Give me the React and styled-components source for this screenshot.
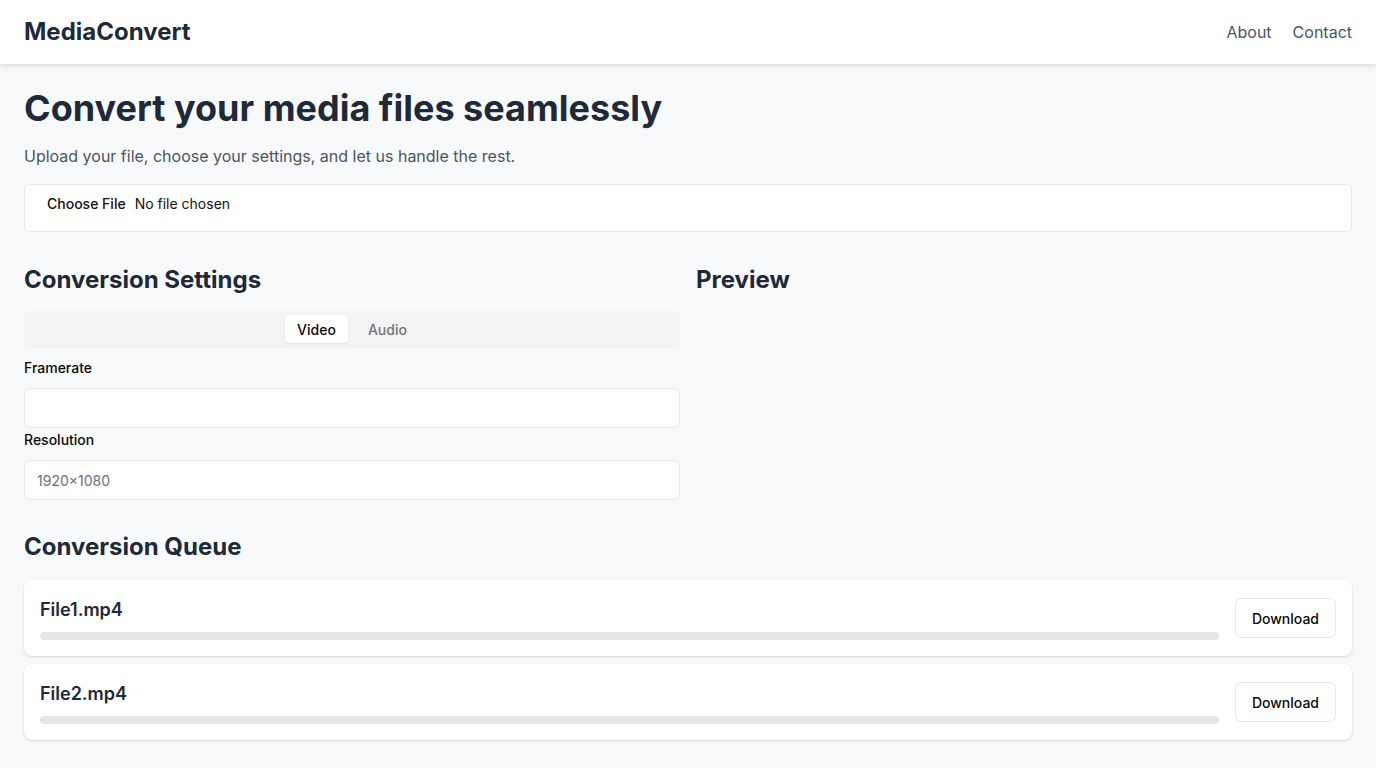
import React from 'react'
import styled, { createGlobalStyle } from 'styled-components'

const GlobalStyle = createGlobalStyle`
  * {
    box-sizing: border-box;
  }
  body {
    margin: 0;
    background: #f8f9fa;
    color: #1f2937;
    font-family: Inter, 'Noto Sans', sans-serif;
  }
`

const Header = styled.header`
  display: flex;
  justify-content: space-between;
  align-items: center;
  height: 64px;
  padding: 0 24px;
  background: #fff;
  box-shadow: 0 2px 6px rgba(0, 0, 0, 0.12);
`
const Brand = styled.div`
  font-size: 24px;
  font-weight: 700;
  color: #1f2937;
  margin-top: -1px;
`
const Nav = styled.nav`
  display: flex;
  gap: 21px;
`
const NavLink = styled.a`
  font-size: 16px;
  color: #4b5563;
  text-decoration: none;
`

const Main = styled.main`
  padding: 24px;
`
const Title = styled.h1`
  margin: 0;
  font-size: 36px;
  line-height: 40px;
  font-weight: 700;
`
const Subtitle = styled.p`
  margin: 16px 0 0;
  font-size: 16px;
  line-height: 24px;
  color: #4b5563;
`
const FileBox = styled.label`
  display: flex;
  gap: 9px;
  height: 48px;
  margin-top: 16px;
  padding: 9px 22px;
  background: #fff;
  border: 1px solid #e5e7eb;
  border-radius: 6px;
  font-size: 14px;
  line-height: 20px;
  color: #111;
`
const FileButton = styled.span`
  font-weight: 500;
`

const Columns = styled.section`
  display: grid;
  grid-template-columns: 1fr 1fr;
  gap: 16px;
  margin-top: 32px;
`
const SectionTitle = styled.h2`
  margin: 0;
  font-size: 24px;
  line-height: 32px;
  font-weight: 700;
`
const TabList = styled.div`
  display: flex;
  justify-content: center;
  gap: 8px;
  height: 36px;
  margin-top: 15px;
  padding: 4px;
  background: #f4f4f5;
  border-radius: 6px;
  box-shadow: 0 1px 1px rgba(0, 0, 0, 0.04);
`
const Tab = styled.button`
  border: 0;
  padding: 0 12px;
  border-radius: 4px;
  font-family: inherit;
  font-size: 14px;
  font-weight: 500;
  background: ${p => (p.$active ? '#fff' : 'transparent')};
  color: ${p => (p.$active ? '#09090b' : '#71717a')};
  box-shadow: ${p => (p.$active ? '0 1px 2px rgba(0,0,0,0.08)' : 'none')};
`
const Label = styled.label`
  display: block;
  margin-top: ${p => p.$top || 2}px;
  font-size: 14px;
  line-height: 20px;
  font-weight: 500;
  color: #09090b;
`
const Input = styled.input`
  display: block;
  width: 100%;
  height: 40px;
  margin-top: 10px;
  padding: 0 12px;
  background: #fff;
  border: 1px solid #e5e7eb;
  border-radius: 6px;
  font-family: inherit;
  font-size: 14px;
  &::placeholder {
    color: #71717a;
  }
`

const Queue = styled.section`
  margin-top: 31px;
`
const QueueList = styled.div`
  display: flex;
  flex-direction: column;
  gap: 8px;
  margin-top: 17px;
`
const Card = styled.div`
  display: flex;
  align-items: center;
  gap: 16px;
  padding: 16px;
  background: #fff;
  border-radius: 8px;
  box-shadow: 0 1px 3px rgba(0, 0, 0, 0.1), 0 1px 2px rgba(0, 0, 0, 0.06);
`
const CardBody = styled.div`
  flex: 1;
`
const FileName = styled.div`
  font-size: 18px;
  line-height: 28px;
  font-weight: 600;
`
const Progress = styled.div`
  height: 8px;
  margin-top: 8px;
  background: #e5e7eb;
  border-radius: 4px;
  overflow: hidden;
`
const ProgressFill = styled.div`
  height: 100%;
  background: #1f2937;
`
const Button = styled.button`
  height: 40px;
  padding: 0 16px;
  background: #fff;
  border: 1px solid #e5e7eb;
  border-radius: 6px;
  font-family: inherit;
  font-size: 14px;
  font-weight: 500;
  color: #09090b;
`

const files = [
  { name: 'File1.mp4', progress: 0 },
  { name: 'File2.mp4', progress: 0 },
]

export default function App() {
  return (
    <>
      <GlobalStyle />
      <Header>
        <Brand>MediaConvert</Brand>
        <Nav>
          <NavLink href="#">About</NavLink>
          <NavLink href="#">Contact</NavLink>
        </Nav>
      </Header>
      <Main>
        <Title>Convert your media files seamlessly</Title>
        <Subtitle>Upload your file, choose your settings, and let us handle the rest.</Subtitle>
        <FileBox>
          <FileButton>Choose File</FileButton>
          <span>No file chosen</span>
        </FileBox>

        <Columns>
          <div>
            <SectionTitle>Conversion Settings</SectionTitle>
            <TabList>
              <Tab $active>Video</Tab>
              <Tab>Audio</Tab>
            </TabList>
            <Label $top={11}>Framerate</Label>
            <Input />
            <Label>Resolution</Label>
            <Input placeholder="1920×1080" />
          </div>
          <div>
            <SectionTitle>Preview</SectionTitle>
          </div>
        </Columns>

        <Queue>
          <SectionTitle>Conversion Queue</SectionTitle>
          <QueueList>
            {files.map(f => (
              <Card key={f.name}>
                <CardBody>
                  <FileName>{f.name}</FileName>
                  <Progress>
                    <ProgressFill style={{ width: `${f.progress}%` }} />
                  </Progress>
                </CardBody>
                <Button>Download</Button>
              </Card>
            ))}
          </QueueList>
        </Queue>
      </Main>
    </>
  )
}
